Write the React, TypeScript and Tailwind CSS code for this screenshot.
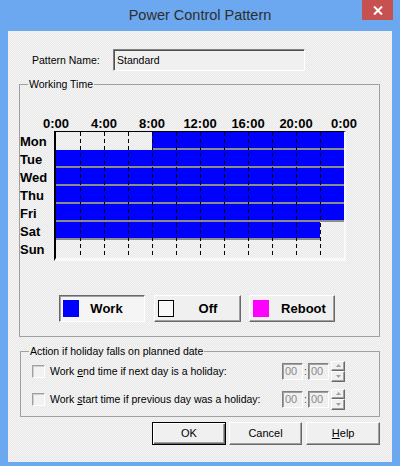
import React from "react";

const hours = ["0:00", "4:00", "8:00", "12:00", "16:00", "20:00", "0:00"];

// widths for segments, 12px per hour
const segW: Record<number, string> = {
  2: "w-[24px]",
  8: "w-[96px]",
  16: "w-[192px]",
  22: "w-[264px]",
  24: "w-[288px]",
};

const days: { name: string; segs: [number, boolean][] }[] = [
  { name: "Mon", segs: [[8, false], [16, true]] },
  { name: "Tue", segs: [[24, true]] },
  { name: "Wed", segs: [[24, true]] },
  { name: "Thu", segs: [[24, true]] },
  { name: "Fri", segs: [[24, true]] },
  { name: "Sat", segs: [[22, true], [2, false]] },
  { name: "Sun", segs: [[24, false]] },
];

const dashPos = [
  "left-[24px]",
  "left-[48px]",
  "left-[72px]",
  "left-[96px]",
  "left-[120px]",
  "left-[144px]",
  "left-[168px]",
  "left-[192px]",
  "left-[216px]",
  "left-[240px]",
  "left-[264px]",
];

const raised =
  "border border-t-white border-l-white border-r-[#696969] border-b-[#696969] shadow-[inset_-1px_-1px_0_#a0a0a0] bg-[#f0f0f0]";
const sunken =
  "border border-t-[#696969] border-l-[#696969] border-r-white border-b-white shadow-[inset_1px_1px_0_#a0a0a0] bg-[#f5f5f5]";
const checker =
  "bg-[image:repeating-conic-gradient(#f4f4f4_0_25%,#e9e9e9_0_50%)] bg-[length:2px_2px]";

function LegendButton({
  label,
  swatch,
  pressed,
  w,
  textPad = "",
}: {
  label: string;
  swatch: string;
  pressed?: boolean;
  w: string;
  textPad?: string;
}) {
  return (
    <div className={`${w} h-[27px] flex items-center pl-[3px] ${pressed ? sunken : raised}`}>
      <div className={`w-[16px] h-[17px] shrink-0 ${swatch}`} />
      <div className={`flex-1 text-center text-[13px] font-bold leading-[15px] text-black ${textPad}`}>{label}</div>
    </div>
  );
}

function Spinner() {
  return (
    <div className="flex flex-col w-[14px] h-[21px]">
      <div className={`h-[10px] flex items-center justify-center ${raised}`}>
        <svg width="5" height="3" viewBox="0 0 5 3">
          <path d="M2.5 0 L5 3 L0 3 Z" fill="#a0a0a0" />
        </svg>
      </div>
      <div className={`h-[11px] flex items-center justify-center ${raised}`}>
        <svg width="5" height="3" viewBox="0 0 5 3">
          <path d="M0 0 L5 0 L2.5 3 Z" fill="#a0a0a0" />
        </svg>
      </div>
    </div>
  );
}

function TimeBox() {
  return (
    <div className="w-[21px] h-[17px] flex items-center pl-[2px] text-[11px] leading-[13px] text-[#8a8a8a] border border-t-[#808080] border-l-[#808080] border-r-white border-b-white shadow-[inset_1px_1px_0_#a0a0a0] bg-[#f0f0f0]">
      00
    </div>
  );
}

function HolidayRow({ children }: { children: React.ReactNode }) {
  return (
    <div className="flex items-center h-[22px]">
      <div className="ml-[11px] w-[13px] h-[13px] border border-t-[#a0a0a0] border-l-[#a0a0a0] border-r-white border-b-white shadow-[inset_1px_1px_0_#d0d0d0] bg-[#f2f2f2]" />
      <div className="ml-[5px] flex-1 text-black">{children}</div>
      <div className="flex items-center mr-[34px]">
        <TimeBox />
        <div className="w-[5px] text-center text-[#555]">:</div>
        <TimeBox />
        <div className="ml-[2px]">
          <Spinner />
        </div>
      </div>
    </div>
  );
}

export default function App() {
  return (
    <div className="w-[400px] h-[466px] bg-[#6ba8ef] flex flex-col font-['Liberation_Sans',Arial,sans-serif] text-[10.5px] leading-[13px] overflow-hidden">
      {/* title bar */}
      <div className="h-[31px] grid grid-cols-[1fr_auto_1fr] shrink-0">
        <div />
        <div className="flex items-center justify-center text-[14.5px] text-[#2e2e2e] pb-[1px]">
          Power Control Pattern
        </div>
        <div className="flex justify-end pr-[7px]">
          <div className="w-[31px] h-[20px] bg-[#c75050] flex items-center justify-center">
            <svg width="10" height="9" viewBox="0 0 10 9">
              <path d="M1 0.5 L9 8.5 M9 0.5 L1 8.5" stroke="#fff" strokeWidth="2" />
            </svg>
          </div>
        </div>
      </div>

      {/* client area */}
      <div className={`mx-[8px] h-[431px] flex flex-col pl-[11px] pr-[12px] ${checker}`}>
        {/* pattern name */}
        <div className="mt-[18px] flex items-center">
          <div className="ml-[13px] w-[81px] text-black">Pattern Name:</div>
          <div className="w-[192px] h-[22px] flex items-center pl-[3px] text-black border border-t-[#808080] border-l-[#808080] border-r-white border-b-white shadow-[inset_1px_1px_0_#505050] bg-[#f0f0f0]">
            Standard
          </div>
        </div>

        {/* working time group */}
        <div className="relative mt-[13px] border border-[#a0a0a0] pb-[14px]">
          <div className={`absolute -top-[7px] left-[8px] px-[1px] text-black ${checker}`}>Working Time</div>

          <div className="mt-[31px] ml-[12px] flex h-[15px]">
            {hours.map((h, i) => (
              <div key={i} className="w-[48px] text-center text-[13px] font-bold leading-[15px] text-black">
                {h}
              </div>
            ))}
          </div>

          <div className="flex">
            <div className="w-[34px] pt-[1px]">
              {days.map((d) => (
                <div key={d.name} className="h-[18px] flex items-center text-[13px] font-bold leading-[15px] text-black">
                  {d.name}
                </div>
              ))}
            </div>
            <div className="relative border-l-2 border-t border-r-2 border-b-[3px] border-l-black border-t-black border-r-[#fafafa] border-b-[#fafafa]">
              {days.map((d) => (
                <div key={d.name} className="flex h-[18px]">
                  {d.segs.map(([n, on], i) => (
                    <div
                      key={i}
                      className={`${segW[n]} h-[18px] ${on ? "bg-[#0000ff] border-b-2 border-[#8c8c8c]" : ""}`}
                    />
                  ))}
                </div>
              ))}
              {dashPos.map((p) => (
                <div
                  key={p}
                  className={`absolute top-0 h-[126px] w-px ${p} bg-[image:repeating-linear-gradient(to_bottom,#000_0_4px,transparent_4px_7px)]`}
                />
              ))}
            </div>
          </div>

          <div className="mt-[34px] ml-[39px] flex">
            <LegendButton label="Work" swatch="bg-[#0000ff]" pressed w="w-[86px]" textPad="pr-[10px]" />
            <div className="ml-[9px]">
              <LegendButton label="Off" swatch="bg-[#f8f8f8] border border-black" w="w-[87px]" textPad="pl-[2px]" />
            </div>
            <div className="ml-[8px]">
              <LegendButton label="Reboot" swatch="bg-[#ff00ff]" w="w-[86px]" textPad="pl-[4px]" />
            </div>
          </div>
        </div>

        {/* holiday group */}
        <div className="relative mt-[14px] ml-[1px] border border-[#a0a0a0] pt-[8px] pb-[6px] flex flex-col gap-[6px]">
          <div className={`absolute -top-[7px] left-[8px] px-[1px] text-black ${checker}`}>
            Action if holiday falls on planned date
          </div>
          <HolidayRow>
            Work <u>e</u>nd time if next day is a holiday:
          </HolidayRow>
          <HolidayRow>
            Work <u>s</u>tart time if previous day was a holiday:
          </HolidayRow>
        </div>

        {/* buttons */}
        <div className="mt-[5px] ml-[133px] flex">
          <div className="w-[74px] h-[23px] flex items-center justify-center text-[11px] text-black border border-black bg-[#f0f0f0] shadow-[inset_1px_1px_0_#fff,inset_-1px_-1px_0_#696969,inset_-2px_-2px_0_#a0a0a0]">
            OK
          </div>
          <div className={`ml-[3px] w-[74px] h-[23px] flex items-center justify-center text-[11px] text-black ${raised}`}>
            Cancel
          </div>
          <div className={`ml-[4px] w-[74px] h-[23px] flex items-center justify-center text-[11px] text-black ${raised}`}>
            <span>
              <u>H</u>elp
            </span>
          </div>
        </div>
      </div>
    </div>
  );
}
